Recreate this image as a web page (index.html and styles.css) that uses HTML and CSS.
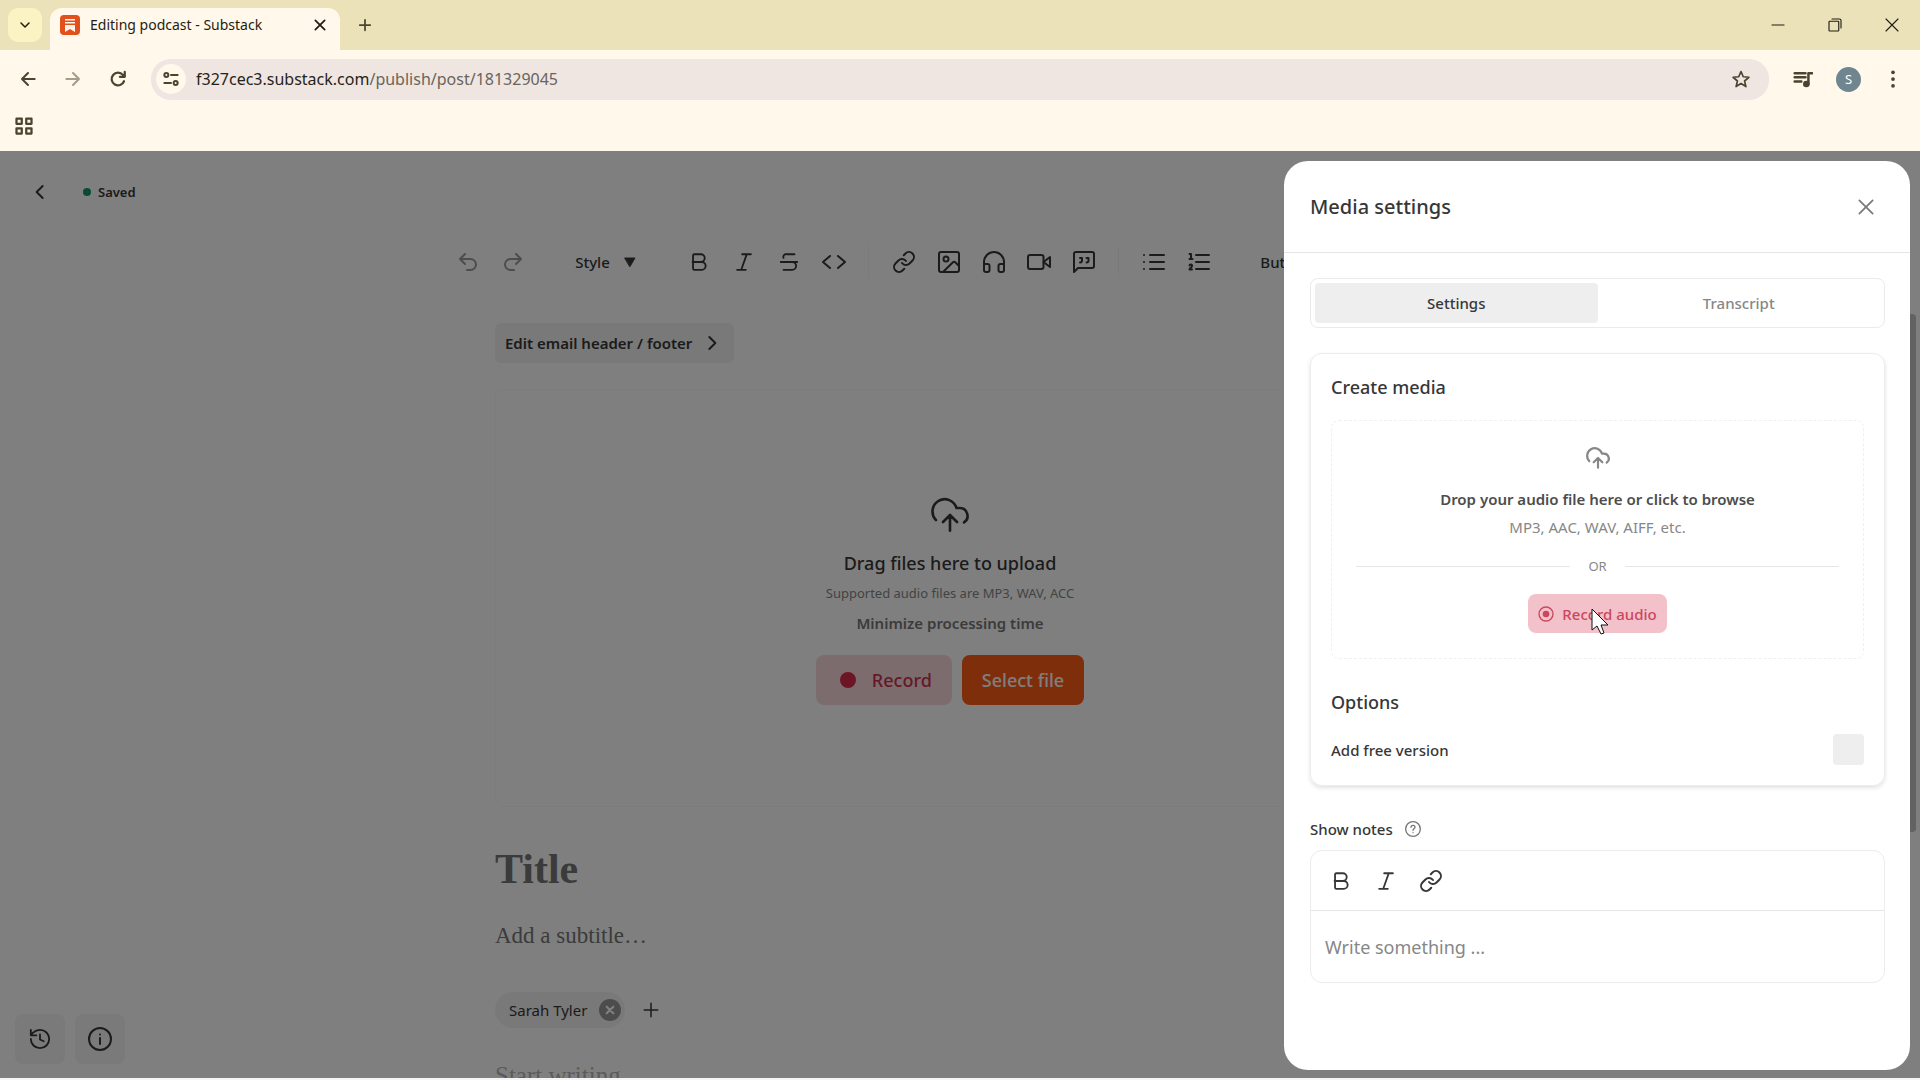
FILE: index.html
```html
<!DOCTYPE html>
<html lang="en">
<head>
  <meta charset="UTF-8">
  <meta name="viewport" content="width=device-width, initial-scale=1.0">
  <title>Editing podcast - Substack</title>
  <link rel="stylesheet" href="styles.css">
</head>
<body>
  <svg class="sprite" aria-hidden="true">
    <symbol id="i-bold" viewBox="0 0 24 24"><path d="M5 12h10a4 4 0 0 1 0 8.5H7A1.5 1.5 0 0 1 5.5 19V5A1.5 1.5 0 0 1 7 3.500h7a4 4 0 0 1 0 8.5"/></symbol>
    <symbol id="i-italic" viewBox="0 0 24 24"><path d="M19.5 3.5H10M14 20.5H4.5M15 3.5l-6 17"/></symbol>
    <symbol id="i-strike" viewBox="0 0 24 24"><path d="M18 3.5H9a3 3 0 0 0-3 4M3 12h18M15.5 12a4 4 0 0 1 0 8.5H6"/></symbol>
    <symbol id="i-code" viewBox="0 0 24 24"><path d="M16 18l7-6-7-6M8 6l-7 6 7 6"/></symbol>
    <symbol id="i-link" viewBox="0 0 24 24"><path d="M10 13a5 5 0 0 0 7.54.54l3-3a5 5 0 0 0-7.07-7.07l-1.72 1.71M14 11a5 5 0 0 0-7.54-.54l-3 3a5 5 0 0 0 7.07 7.07l1.71-1.71"/></symbol>
    <symbol id="i-image" viewBox="0 0 24 24"><rect x="2" y="2" width="20" height="20" rx="2"/><circle cx="9" cy="9" r="2.5"/><path d="M22 16l-3.500-3.500a2 2 0 0 0-2.800 0L6 22"/></symbol>
    <symbol id="i-headphones" viewBox="0 0 24 24"><path d="M2 14h3.5a2 2 0 0 1 2 2v4a2 2 0 0 1-2 2H4a2 2 0 0 1-2-2v-8a10 10 0 0 1 20 0v8a2 2 0 0 1-2 2h-1.5a2 2 0 0 1-2-2v-4a2 2 0 0 1 2-2H22"/></symbol>
    <symbol id="i-video" viewBox="0 0 24 24"><rect x="1" y="5" width="15.5" height="14" rx="2"/><path d="M16.5 12l6.500-5v10z"/></symbol>
    <symbol id="i-quote" viewBox="0 0 24 24"><path d="M22 16a2 2 0 0 1-2 2H6l-4 4V4a2 2 0 0 1 2-2h16a2 2 0 0 1 2 2zM8 12.5a2 2 0 0 0 2-2V8H8M14.5 12.5a2 2 0 0 0 2-2V8h-2"/></symbol>
    <symbol id="i-list" viewBox="0 0 24 24"><path d="M8 5h14M8 12h14M8 19h14M2 5h.01M2 12h.01M2 19h.01"/></symbol>
    <symbol id="i-ordered" viewBox="0 0 24 24"><path d="M9 5h13M9 12h13M9 19h13M2.5 4H4v5M2.5 9h3M5 19.5H2.5c0-1.5 2.5-2 2.5-3.5a1.2 1.2 0 0 0-2.5-.5"/></symbol>
    <symbol id="i-undo" viewBox="0 0 24 24"><path d="M9 14L4 9l5-5M4 9h10.5a5.5 5.5 0 0 1 0 11H11"/></symbol>
    <symbol id="i-redo" viewBox="0 0 24 24"><path d="M15 14l5-5-5-5M20 9H9.5a5.5 5.5 0 0 0 0 11H13"/></symbol>
    <symbol id="i-cloud" viewBox="0 0 24 24"><path d="M4 14.9A7 7 0 1 1 15.71 8h1.79a4.5 4.5 0 0 1 2.5 8.24M12 12v9M16 16l-4-4-4 4"/></symbol>
    <symbol id="i-history" viewBox="0 0 24 24"><path d="M2 12a10 10 0 1 0 10-10 11 11 0 0 0-7.5 3L2 7.5M2 2v6h6M12 7v5.5l4 2"/></symbol>
    <symbol id="i-info" viewBox="0 0 24 24"><circle cx="12" cy="12" r="11"/><path d="M12 17v-6M12 7.5h.01"/></symbol>
    <symbol id="i-help" viewBox="0 0 24 24"><circle cx="12" cy="12" r="11"/><path d="M9 9.5a3 3 0 0 1 6 0c0 2-3 2.5-3 4.5M12 17.5h.01"/></symbol>
    <symbol id="i-close" viewBox="0 0 24 24"><path d="M4 4l16 16M20 4L4 20"/></symbol>
    <symbol id="i-plus" viewBox="0 0 24 24"><path d="M12 3v18M3 12h18"/></symbol>
    <symbol id="i-left" viewBox="0 0 24 24"><path d="M16 3l-9 9 9 9"/></symbol>
    <symbol id="i-right" viewBox="0 0 24 24"><path d="M8 3l9 9-9 9"/></symbol>
    <symbol id="i-down" viewBox="0 0 24 24"><path d="M4 8l8 8 8-8"/></symbol>
    <symbol id="i-back" viewBox="0 0 24 24"><path d="M22 12H3M12 3l-9 9 9 9"/></symbol>
    <symbol id="i-forward" viewBox="0 0 24 24"><path d="M2 12h19M12 3l9 9-9 9"/></symbol>
    <symbol id="i-reload" viewBox="0 0 24 24"><path d="M20 15a8.5 8.5 0 1 1-1.500-8.500L21 9M21 2.500V9h-6.500"/></symbol>
    <symbol id="i-tune" viewBox="0 0 24 24"><circle cx="5" cy="6" r="3"/><path d="M12 6h10M2 18h10"/><circle cx="19" cy="18" r="3"/></symbol>
    <symbol id="i-star" viewBox="0 0 24 24"><path d="M12 3l2.700 6.300 6.800.600-5.200 4.500 1.600 6.700-5.900-3.600-5.900 3.600 1.600-6.700L2.500 9.900l6.800-.600z"/></symbol>
    <symbol id="i-queue" viewBox="0 0 24 24"><path d="M2 5h13M2 10h13M2 15h8M18.5 18V5H23"/><circle cx="16" cy="18" r="2.5" fill="currentColor"/></symbol>
    <symbol id="i-grid" viewBox="0 0 24 24"><path d="M2 2h7v7H2zM15 2h7v7h-7zM2 15h7v7H2zM15 15h7v7h-7z"/></symbol>
    <symbol id="i-dots" viewBox="0 0 24 24"><g fill="currentColor" stroke="none"><circle cx="12" cy="3" r="2.5"/><circle cx="12" cy="12" r="2.5"/><circle cx="12" cy="21" r="2.5"/></g></symbol>
    <symbol id="i-minus" viewBox="0 0 24 24"><path d="M4 12h16"/></symbol>
    <symbol id="i-restore" viewBox="0 0 24 24"><rect x="4" y="7" width="13" height="13" rx="1"/><path d="M8 4h10a2 2 0 0 1 2 2v10"/></symbol>
    <symbol id="i-record" viewBox="0 0 24 24"><circle cx="12" cy="12" r="10.5"/><circle cx="12" cy="12" r="5" fill="currentColor" stroke="none"/></symbol>
    <symbol id="i-caret" viewBox="0 0 24 24"><path d="M2 4h20L12 21z" fill="currentColor"/></symbol>
  </svg>

  <header class="browser">
    <div class="tab-strip">
      <button class="tab-search" aria-label="Search tabs"><svg class="icon s12 heavy"><use href="#i-down"/></svg></button>
      <div class="tab">
        <svg class="favicon" viewBox="0 0 20 20" aria-hidden="true">
          <rect width="20" height="20" rx="4" fill="#e2511c"/>
          <path d="M5 4h10v1.500H5zM5 7h10v1.500H5zM5 10h10v7l-5-3-5 3z" fill="#fff3ea"/>
        </svg>
        <span class="tab-title">Editing podcast - Substack</span>
        <button aria-label="Close tab"><svg class="icon s14 heavy"><use href="#i-close"/></svg></button>
      </div>
      <button class="new-tab" aria-label="New tab"><svg class="icon s14 heavy"><use href="#i-plus"/></svg></button>
      <div class="window-controls">
        <button aria-label="Minimize"><svg class="icon s18 thin"><use href="#i-minus"/></svg></button>
        <button aria-label="Restore"><svg class="icon s18 thin"><use href="#i-restore"/></svg></button>
        <button aria-label="Close"><svg class="icon s18 thin"><use href="#i-close"/></svg></button>
      </div>
    </div>
    <div class="address-row">
      <button aria-label="Back"><svg class="icon s16 heavy"><use href="#i-back"/></svg></button>
      <button class="disabled" aria-label="Forward"><svg class="icon s16 heavy"><use href="#i-forward"/></svg></button>
      <button aria-label="Reload"><svg class="icon s18 heavy"><use href="#i-reload"/></svg></button>
      <div class="omnibox">
        <button class="site-info" aria-label="Site information"><svg class="icon s16 heavy"><use href="#i-tune"/></svg></button>
        <a class="url" href="#">f327cec3.substack.com<span>/publish/post/181329045</span></a>
        <button aria-label="Bookmark this tab"><svg class="icon s20"><use href="#i-star"/></svg></button>
      </div>
      <div class="browser-actions">
        <button aria-label="Media controls"><svg class="icon s20 heavy"><use href="#i-queue"/></svg></button>
        <button class="avatar" aria-label="Profile">S</button>
        <button aria-label="Menu"><svg class="icon s18"><use href="#i-dots"/></svg></button>
      </div>
    </div>
    <div class="bookmarks">
      <button aria-label="Apps"><svg class="icon s18 heavy"><use href="#i-grid"/></svg></button>
    </div>
  </header>

  <div class="page">
    <main class="editor">
      <div class="top-bar">
        <button aria-label="Back to posts"><svg class="icon s16 heavy"><use href="#i-left"/></svg></button>
        <span class="saved"><i class="dot"></i>Saved</span>
      </div>

      <div class="toolbar">
        <button class="muted" aria-label="Undo"><svg class="icon s24"><use href="#i-undo"/></svg></button>
        <button class="muted" aria-label="Redo"><svg class="icon s24"><use href="#i-redo"/></svg></button>
        <button class="menu style-menu">Style <svg class="icon s12"><use href="#i-caret"/></svg></button>
        <button aria-label="Bold"><svg class="icon s22"><use href="#i-bold"/></svg></button>
        <button aria-label="Italic"><svg class="icon s22"><use href="#i-italic"/></svg></button>
        <button aria-label="Strikethrough"><svg class="icon s22"><use href="#i-strike"/></svg></button>
        <button aria-label="Code"><svg class="icon s24"><use href="#i-code"/></svg></button>
        <hr class="divider">
        <button aria-label="Link"><svg class="icon s24"><use href="#i-link"/></svg></button>
        <button aria-label="Image"><svg class="icon s24"><use href="#i-image"/></svg></button>
        <button aria-label="Audio"><svg class="icon s24"><use href="#i-headphones"/></svg></button>
        <button aria-label="Video"><svg class="icon s24"><use href="#i-video"/></svg></button>
        <button aria-label="Quote"><svg class="icon s24"><use href="#i-quote"/></svg></button>
        <hr class="divider">
        <button aria-label="Bulleted list"><svg class="icon s24"><use href="#i-list"/></svg></button>
        <button aria-label="Numbered list"><svg class="icon s24"><use href="#i-ordered"/></svg></button>
        <button class="menu button-menu">Button</button>
      </div>

      <div class="column">
        <button class="email-header">Edit email header / footer <svg class="icon s16 heavy"><use href="#i-right"/></svg></button>

        <section class="upload">
          <svg class="icon s42 thin"><use href="#i-cloud"/></svg>
          <h2>Drag files here to upload</h2>
          <p class="formats">Supported audio files are MP3, WAV, ACC</p>
          <a class="tips" href="#">Minimize processing time</a>
          <div class="upload-actions">
            <button class="record"><i class="dot"></i>Record</button>
            <button class="select">Select file</button>
          </div>
        </section>

        <input class="post-title" type="text" placeholder="Title" aria-label="Title">
        <input class="post-subtitle" type="text" placeholder="Add a subtitle…" aria-label="Subtitle">
        <div class="authors">
          <span class="author">Sarah Tyler
            <button aria-label="Remove author"><svg class="icon s10 bold"><use href="#i-close"/></svg></button>
          </span>
          <button class="add-author" aria-label="Add author"><svg class="icon s18"><use href="#i-plus"/></svg></button>
        </div>
        <input class="post-body" type="text" placeholder="Start writing..." aria-label="Body">
      </div>
    </main>

    <div class="corner-buttons">
      <button aria-label="Version history"><svg class="icon s22"><use href="#i-history"/></svg></button>
      <button aria-label="Post info"><svg class="icon s24"><use href="#i-info"/></svg></button>
    </div>
    <div class="scroll-thumb"></div>
    <div class="backdrop"></div>

    <aside class="panel" role="dialog" aria-labelledby="panel-title">
      <div class="panel-head">
        <h1 id="panel-title">Media settings</h1>
        <button aria-label="Close"><svg class="icon s20"><use href="#i-close"/></svg></button>
      </div>
      <div class="panel-body">
        <div class="segments" role="tablist">
          <button class="active" role="tab" aria-selected="true">Settings</button>
          <button role="tab" aria-selected="false">Transcript</button>
        </div>

        <section class="card">
          <h2>Create media</h2>
          <div class="dropzone">
            <svg class="icon s26"><use href="#i-cloud"/></svg>
            <strong>Drop your audio file here or click to browse</strong>
            <p>MP3, AAC, WAV, AIFF, etc.</p>
            <div class="or">OR</div>
            <button class="record-audio">
              <svg class="icon s16"><use href="#i-record"/></svg>Record audio
              <svg class="cursor" viewBox="0 0 18 27" aria-hidden="true"><path d="M1 1v21l5-4 4 8 3-1-3-8h7z" fill="#fff" stroke="#111"/></svg>
            </button>
          </div>
          <h2>Options</h2>
          <div class="option">
            <label for="free-version">Add free version</label>
            <input id="free-version" type="checkbox">
          </div>
        </section>

        <div class="notes-label">
          <label for="notes">Show notes</label>
          <svg class="icon s16"><use href="#i-help"/></svg>
        </div>
        <div class="notes">
          <div class="notes-toolbar">
            <button aria-label="Bold"><svg class="icon s22"><use href="#i-bold"/></svg></button>
            <button aria-label="Italic"><svg class="icon s22"><use href="#i-italic"/></svg></button>
            <button aria-label="Link"><svg class="icon s24"><use href="#i-link"/></svg></button>
          </div>
          <textarea id="notes" rows="1" placeholder="Write something ..."></textarea>
        </div>
      </div>
    </aside>
  </div>
</body>
</html>
```

FILE: styles.css
```css
* {
  box-sizing: border-box;
}

body {
  margin: 0;
  height: 100vh;
  display: flex;
  flex-direction: column;
  overflow: hidden;
  padding-bottom: 2px;
  background: #f4f5f5;
  font-family: "Noto Sans", "Open Sans", sans-serif;
  font-size: 15px;
  line-height: 20px;
  color: #363737;
}

h1, h2, p {
  margin: 0;
}

button, input, textarea {
  font: inherit;
  color: inherit;
  border: none;
  background: none;
  padding: 0;
  outline: none;
}

button {
  display: flex;
  align-items: center;
  justify-content: center;
  cursor: pointer;
}

a {
  color: inherit;
  text-decoration: none;
}

/* icons */
.sprite {
  display: none;
}

.icon {
  flex: none;
  fill: none;
  stroke: currentColor;
  stroke-width: 2;
  stroke-linecap: round;
  stroke-linejoin: round;
}

.thin { stroke-width: 1.5; }
.heavy { stroke-width: 3; }
.bold { stroke-width: 5; }

.s10 { width: 10px; height: 10px; }
.s12 { width: 12px; height: 12px; }
.s14 { width: 14px; height: 14px; }
.s16 { width: 16px; height: 16px; }
.s18 { width: 18px; height: 18px; }
.s20 { width: 20px; height: 20px; }
.s22 { width: 22px; height: 22px; }
.s24 { width: 24px; height: 24px; }
.s26 { width: 26px; height: 26px; }
.s42 { width: 42px; height: 42px; }

/* browser window */
.browser {
  flex: none;
  background: #fff8eb;
  color: #4a4530;
}

.tab-strip {
  display: flex;
  align-items: flex-end;
  height: 50px;
  background: #ebe2b9;
}

.tab-search {
  width: 34px;
  height: 34px;
  margin: 0 8px;
  align-self: center;
  border-radius: 10px;
  background: #fcf3c5;
  color: #1f1d12;
}

.tab {
  display: flex;
  align-items: center;
  gap: 10px;
  width: 290px;
  height: 42px;
  padding: 0 13px 8px 10px;
  border-radius: 12px 12px 0 0;
  background: #fff8eb;
  color: #1f1d12;
  font-size: 14px;
}

.favicon {
  width: 20px;
  height: 20px;
}

.tab-title {
  flex: 1;
}

.new-tab {
  width: 50px;
  height: 50px;
}

.window-controls {
  display: flex;
  margin-left: auto;
  color: #1f1d12;
}

.window-controls button {
  width: 57px;
  height: 50px;
}

.address-row {
  display: flex;
  align-items: center;
  height: 58px;
  padding-left: 5px;
}

.address-row > button {
  width: 45px;
  height: 40px;
}

.address-row .disabled {
  opacity: 0.5;
}

.omnibox {
  flex: 1;
  display: flex;
  align-items: center;
  height: 41px;
  margin-left: 11px;
  padding: 0 18px 0 5px;
  border-radius: 20px;
  background: #efe6e1;
}

.site-info {
  width: 30px;
  height: 30px;
  border-radius: 50%;
  background: #fff8eb;
}

.url {
  flex: 1;
  padding-left: 10px;
  font-size: 16px;
  color: #26231a;
}

.url span {
  color: #69645c;
}

.browser-actions {
  display: flex;
  align-items: center;
  gap: 23px;
  padding: 0 18px 0 24px;
}

.avatar {
  width: 25px;
  height: 25px;
  border-radius: 50%;
  background: #6f858f;
  color: #fff;
  font-size: 13px;
}

.bookmarks {
  display: flex;
  align-items: center;
  height: 43px;
  padding: 0 15px 7px;
}

/* editor */
.page {
  position: relative;
  flex: 1;
  min-height: 0;
  overflow: hidden;
  background: #fff;
}

.editor {
  padding-right: 20px;
}

.top-bar {
  display: flex;
  align-items: center;
  height: 82px;
  padding-left: 32px;
  gap: 35px;
}

.saved {
  display: flex;
  align-items: center;
  gap: 7px;
  font-size: 13px;
  font-weight: 600;
}

.dot {
  width: 8px;
  height: 8px;
  border-radius: 50%;
  background: #149468;
}

.toolbar {
  display: flex;
  align-items: center;
  max-width: 1010px;
  height: 58px;
  margin: 0 auto;
}

.toolbar button {
  flex: none;
  width: 45px;
  height: 40px;
}

.toolbar .muted {
  opacity: 0.5;
}

.toolbar .menu {
  gap: 14px;
  font-weight: 500;
}

.toolbar .style-menu {
  width: 141px;
}

.toolbar .button-menu {
  width: 128px;
}

.divider {
  flex: none;
  width: 1px;
  height: 32px;
  margin: 0 12px;
  border: none;
  background: #f4f4f4;
}

.column {
  max-width: 910px;
  margin: 32px auto 0;
}

.email-header {
  gap: 12px;
  height: 40px;
  padding: 0 14px 0 10px;
  border-radius: 6px;
  background: #f3f3f3;
  font-weight: 600;
}

.upload {
  display: flex;
  flex-direction: column;
  align-items: center;
  height: 418px;
  margin-top: 26px;
  padding-top: 104px;
  border: 1px solid #f8f8f8;
  border-radius: 8px;
}

.upload h2 {
  margin-top: 15px;
  font-size: 18px;
  font-weight: 500;
  line-height: 24px;
}

.formats {
  margin-top: 8px;
  font-size: 13px;
  color: #868787;
}

.tips {
  margin-top: 10px;
  font-weight: 600;
  color: #777;
}

.upload-actions {
  display: flex;
  gap: 10px;
  margin-top: 22px;
  font-size: 18px;
  font-weight: 500;
}

.upload-actions button {
  height: 50px;
  padding: 0 20px;
  border-radius: 8px;
}

.upload-actions .record {
  gap: 16px;
  padding-left: 24px;
  background: #fbd9dd;
  color: #c8324c;
}

.record .dot {
  width: 16px;
  height: 16px;
  background: #d82c4a;
}

.upload-actions .select {
  background: #ff5c17;
  color: #fff;
}

.post-title,
.post-subtitle,
.post-body {
  display: block;
  width: 100%;
  font-family: "Liberation Serif", serif;
}

.post-title {
  height: 56px;
  margin-top: 34px;
  font-size: 42px;
  font-weight: 700;
}

.post-subtitle {
  height: 40px;
  margin-top: 19px;
  font-size: 23px;
}

.post-body {
  height: 32px;
  margin-top: 32px;
  font-size: 25px;
}

.column ::placeholder {
  color: #777;
  opacity: 1;
}

.column .post-body::placeholder {
  color: #b6b6b6;
}

.authors {
  display: flex;
  align-items: center;
  gap: 17px;
  margin-top: 36px;
}

.author {
  display: flex;
  align-items: center;
  gap: 12px;
  height: 36px;
  padding: 0 4px 0 14px;
  border-radius: 18px;
  background: #f3f3f3;
}

.author button {
  width: 22px;
  height: 22px;
  border-radius: 50%;
  background: #999;
  color: #fff;
}

/* floating pieces of the page */
.corner-buttons {
  position: absolute;
  left: 15px;
  bottom: 14px;
  display: flex;
  gap: 10px;
}

.corner-buttons button {
  width: 50px;
  height: 50px;
  border-radius: 8px;
  background: #f5f5f5;
}

.scroll-thumb {
  position: absolute;
  top: 163px;
  right: 4px;
  width: 8px;
  height: 518px;
  border-radius: 4px;
  background: #c4c4c4;
}

.backdrop {
  position: absolute;
  inset: 0;
  background: rgba(0, 0, 0, 0.5);
}

/* media settings panel */
.panel {
  position: absolute;
  top: 10px;
  right: 10px;
  bottom: 8px;
  width: 626px;
  border-radius: 24px;
  background: #fff;
}

.panel-head {
  display: flex;
  align-items: center;
  justify-content: space-between;
  height: 92px;
  padding: 0 34px 0 26px;
  border-bottom: 1px solid #e6e6e6;
}

.panel-head h1 {
  font-size: 20px;
  font-weight: 500;
  line-height: 28px;
}

.panel-head button {
  color: #777;
}

.panel-body {
  padding: 25px 25px 0 26px;
}

.segments {
  display: flex;
  height: 50px;
  padding: 4px;
  border: 1px solid #ebebeb;
  border-radius: 8px;
}

.segments button {
  flex: 1;
  border-radius: 4px;
  font-weight: 500;
  color: #868787;
}

.segments .active {
  background: #eee;
  color: #363737;
}

.card {
  margin-top: 25px;
  padding: 20px;
  border: 1px solid #ececec;
  border-radius: 12px;
  box-shadow: 0 2px 4px rgba(0, 0, 0, 0.12);
}

.card h2 {
  font-size: 18px;
  font-weight: 500;
  line-height: 26px;
}

.dropzone {
  display: flex;
  flex-direction: column;
  align-items: center;
  margin: 20px 0 30px;
  padding: 24px 24px 25px;
  border: 1px dashed #f0f0f0;
  border-radius: 8px;
  color: #868787;
}

.dropzone strong {
  margin-top: 18px;
  font-weight: 600;
  color: #4c4d4d;
}

.dropzone p {
  margin-top: 8px;
}

.or {
  display: flex;
  align-items: center;
  gap: 18px;
  align-self: stretch;
  margin-top: 19px;
  font-size: 13px;
}

.or::before,
.or::after {
  content: "";
  flex: 1;
  height: 1px;
  background: #e6e6e6;
}

.record-audio {
  position: relative;
  gap: 8px;
  height: 39px;
  margin-top: 18px;
  padding: 0 10px;
  border-radius: 8px;
  background: #f3c1c9;
  font-weight: 500;
  color: #cb4660;
}

/* pointer resting on the button */
.cursor {
  position: absolute;
  left: 63px;
  top: 14px;
  width: 18px;
  height: 27px;
}

.option {
  display: flex;
  align-items: center;
  justify-content: space-between;
  margin-top: 19px;
  font-weight: 500;
}

.option input {
  appearance: none;
  width: 31px;
  height: 31px;
  margin: 0;
  border-radius: 4px;
  background: #eee;
}

.notes-label {
  display: flex;
  align-items: center;
  gap: 12px;
  margin-top: 33px;
  font-weight: 500;
}

.notes-label .icon {
  color: #777;
}

.notes {
  margin-top: 11px;
  border: 1px solid #ececec;
  border-radius: 12px;
}

.notes-toolbar {
  display: flex;
  height: 60px;
  padding-left: 7px;
  border-bottom: 1px solid #e6e6e6;
}

.notes-toolbar button {
  width: 45px;
}

.notes textarea {
  display: block;
  width: 100%;
  height: 71px;
  padding: 23px 14px;
  resize: none;
  font-size: 18px;
  line-height: 26px;
}

.notes textarea::placeholder {
  color: #868787;
  opacity: 1;
}
```
